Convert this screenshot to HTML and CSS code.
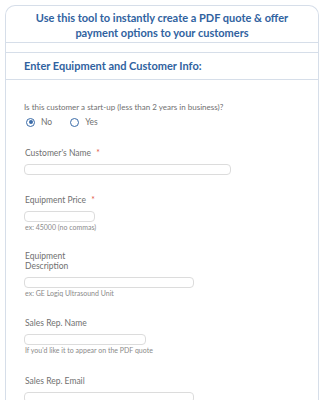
FILE: index.html
```html
<!DOCTYPE html>
<html lang="en">
<head>
    <meta charset="UTF-8">
    <meta name="viewport" content="width=device-width, initial-scale=1.0">
    <title>PDF Quote</title>
    <link rel="stylesheet" href="styles.css">
</head>
<body>
    <div class="card">
        <div class="card-title">Use this tool to instantly create a PDF quote &amp; offer payment options to your customers</div>
        <div class="spacer"></div>
        <div class="section-title">Enter Equipment and Customer Info:</div>

        <div class="form">
            <div class="question">Is this customer a start-up (less than 2 years in business)?</div>
            <div class="radios">
                <label class="radio"><span class="dot checked"></span>No</label>
                <label class="radio"><span class="dot"></span>Yes</label>
            </div>

            <div class="field">
                <div class="label">Customer's Name <span class="req">*</span></div>
                <div class="input w-name"></div>
            </div>

            <div class="field">
                <div class="label">Equipment Price <span class="req">*</span></div>
                <div class="input w-price"></div>
                <div class="hint">ex: 45000 (no commas)</div>
            </div>

            <div class="field">
                <div class="label narrow">Equipment Description</div>
                <div class="input w-desc"></div>
                <div class="hint">ex: GE Logiq Ultrasound Unit</div>
            </div>

            <div class="field">
                <div class="label">Sales Rep. Name</div>
                <div class="input w-rep"></div>
                <div class="hint">If you'd like it to appear on the PDF quote</div>
            </div>

            <div class="field">
                <div class="label">Sales Rep. Email</div>
                <div class="input w-desc"></div>
            </div>
        </div>
    </div>
</body>
</html>
```

FILE: styles.css
```css
body {
    font-family: 'Lato', sans-serif;
    margin: 0;
    padding: 0;
    background: white;
    overflow: hidden;
}
.card {
    margin: 5px 6px 0 5px;
    border: 1px solid #d6dee9;
    border-bottom: none;
    border-radius: 10px 10px 0 0;
    height: 394px;
    overflow: hidden;
}
.card-title {
    color: #3062a0;
    font-weight: bold;
    font-size: 11px;
    line-height: 15px;
    text-align: center;
    padding: 4px 20px 2px;
    border-bottom: 1px solid #d6dee9;
}
.spacer {
    height: 9px;
    border-bottom: 1px solid #d6dee9;
}
.section-title {
    color: #3062a0;
    font-weight: bold;
    font-size: 11px;
    height: 26px;
    line-height: 26px;
    padding-left: 18px;
    border-bottom: 1px solid #d6dee9;
}
.form {
    padding: 21px 18px 0;
    color: #707070;
}
.question {
    font-size: 8px;
    line-height: 12px;
}
.radios {
    display: flex;
    gap: 18px;
    padding-left: 2px;
    margin-top: 3px;
}
.radio {
    display: flex;
    align-items: center;
    gap: 6px;
    font-size: 8.5px;
    line-height: 12px;
}
.dot {
    width: 7px;
    height: 7px;
    border: 1px solid #3a6ba8;
    border-radius: 50%;
    position: relative;
}
.dot.checked::after {
    content: '';
    position: absolute;
    left: 1.5px;
    top: 1.5px;
    width: 4px;
    height: 4px;
    border-radius: 50%;
    background: #3a6ba8;
}
.field {
    margin-top: 20px;
}
.label {
    font-size: 8.5px;
    line-height: 10px;
    padding-left: 1px;
    margin-bottom: 6px;
}
.label.narrow {
    width: 60px;
}
.req {
    color: #e2574c;
    margin-left: 3px;
}
.input {
    height: 9px;
    border: 1px solid #dcdcdc;
    border-radius: 4px;
}
.hint {
    font-size: 7px;
    line-height: 8px;
    margin-top: 1px;
    padding-left: 1px;
    color: #8a8a8a;
}
.field:nth-child(6) {
    margin-top: 21px;
}
.field:last-child {
    margin-top: 22px;
}
.w-name { width: 205px; }
.w-price { width: 69px; }
.w-desc { width: 168px; }
.w-rep { width: 120px; }
```
